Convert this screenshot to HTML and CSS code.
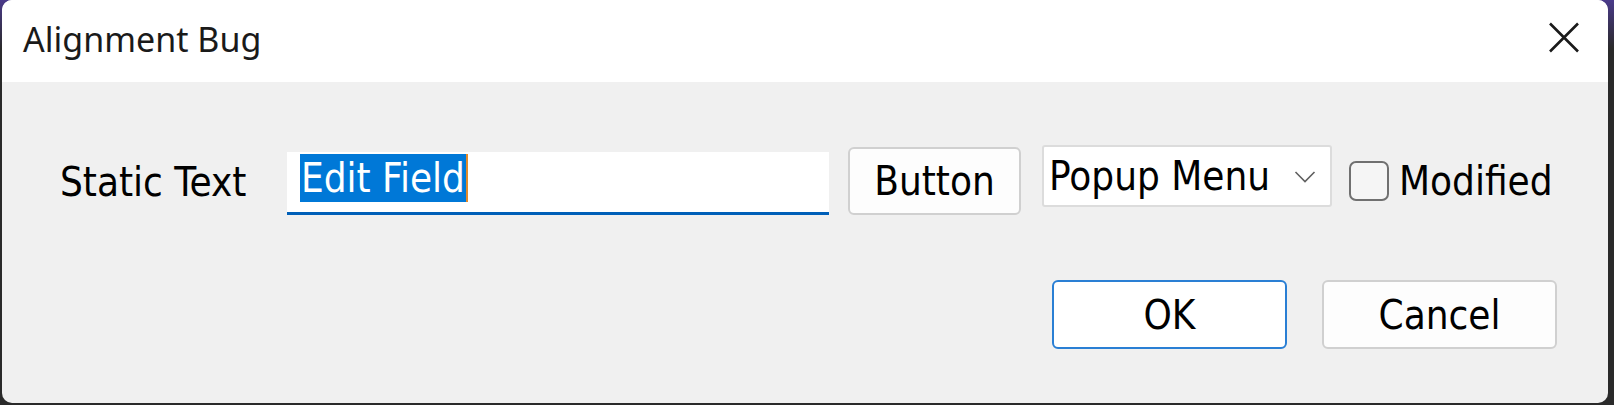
FILE: index.html
```html
<!DOCTYPE html>
<html>
<head>
<meta charset="utf-8">
<link rel="stylesheet" href="styles.css">
</head>
<body>
<div class="window">
  <div class="titlebar">
    <span class="title">Alignment Bug</span>
    <span class="close">
      <svg width="32" height="31" viewBox="0 0 32 31"><path d="M2 1.5L30 29.5M30 1.5L2 29.5" stroke="#1a1a1a" stroke-width="2.6" fill="none"/></svg>
    </span>
  </div>
  <div class="content">
    <div class="row">
      <span class="label">Static Text</span>
      <div class="edit"><span class="sel">Edit Field</span><span class="caret"></span></div>
      <div class="btn small">Button</div>
      <div class="popup"><span>Popup Menu</span>
        <svg class="chev" width="22" height="14" viewBox="0 0 22 14"><path d="M1.5 2L11 11.5L20.5 2" stroke="#606060" stroke-width="1.6" fill="none"/></svg>
      </div>
      <div class="check"><span class="box"></span><span class="checklabel">Modified</span></div>
    </div>
    <div class="actions">
      <div class="btn big default">OK</div>
      <div class="btn big">Cancel</div>
    </div>
  </div>
</div>
</body>
</html>
```
FILE: styles.css
```css
html, body {
  margin: 0;
  padding: 0;
}
body {
  width: 1614px;
  height: 405px;
  background: linear-gradient(180deg, #4a3a8a 0%, #2a2a2a 12%, #2a2a2a 100%);
  overflow: hidden;
}
.window {
  margin-left: 2px;
  width: 1606px;
  height: 403px;
  background: #f0f0f0;
  border-radius: 10px;
  overflow: hidden;
  display: flex;
  flex-direction: column;
  font-family: "DejaVu Sans Condensed", "DejaVu Sans", sans-serif;
  color: #000;
}
.titlebar {
  height: 82px;
  background: #ffffff;
  display: flex;
  align-items: center;
  justify-content: space-between;
  padding: 0 28px 0 21px;
}
.title {
  font-family: "Noto Sans", "Open Sans", sans-serif;
  font-size: 34px;
  color: #1a1a1a;
  margin-top: -4px;
}
.close {
  display: flex;
  margin-top: -8px;
}
.content {
  display: flex;
  flex-direction: column;
  padding: 63px 51px 0 58px;
}
.row {
  display: flex;
  align-items: flex-start;
  height: 70px;
}
.label {
  font-size: 40px;
  line-height: 46px;
  margin-top: 14px;
  width: 227px;
}
.edit {
  box-sizing: border-box;
  width: 542px;
  height: 63px;
  margin-top: 7px;
  background: #fff;
  border-bottom: 3px solid #005fb8;
  display: flex;
  align-items: flex-start;
  padding: 2px 0 0 13px;
}
.sel {
  background: #0078d7;
  color: #fff;
  font-size: 40px;
  line-height: 48px;
  padding: 0 1px;
}
.caret {
  width: 2px;
  height: 48px;
  background: #e08a2c;
}
.btn {
  box-sizing: border-box;
  background: #fdfdfd;
  border: 2px solid #d0d0d0;
  border-radius: 6px;
  display: flex;
  align-items: center;
  justify-content: center;
  font-size: 40px;
}
.btn.small {
  width: 173px;
  height: 68px;
  margin-left: 19px;
  margin-top: 2px;
}
.popup {
  box-sizing: border-box;
  width: 290px;
  height: 62px;
  margin-left: 21px;
  background: #fff;
  border: 2px solid #dcdcdc;
  border-radius: 3px;
  display: flex;
  align-items: center;
  justify-content: space-between;
  padding: 0 14px 0 5px;
  font-size: 40px;
}
.chev {
  margin-top: 2px;
}
.check {
  display: flex;
  align-items: center;
  margin-left: 17px;
  margin-top: 14px;
}
.box {
  box-sizing: border-box;
  width: 40px;
  height: 40px;
  border: 2px solid #707070;
  border-radius: 7px;
  background: #f5f5f5;
}
.checklabel {
  font-size: 40px;
  margin-left: 10px;
  line-height: 44px;
}
.actions {
  display: flex;
  justify-content: flex-end;
  gap: 35px;
  margin-top: 65px;
}
.btn.big {
  width: 235px;
  height: 69px;
}
.btn.default {
  border-color: #2a7fd4;
  background: #fff;
}
```
